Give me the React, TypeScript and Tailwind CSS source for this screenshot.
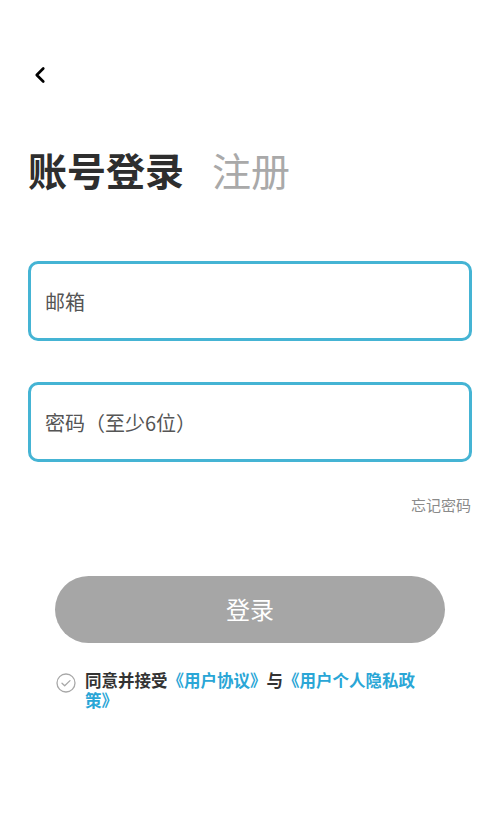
import { ChevronLeft } from 'lucide-react';

const font = { fontFamily: '"Noto Sans CJK SC", "Noto Sans", sans-serif' };

export default function App() {
  return (
    <main style={font} className="flex min-h-[840px] w-[500px] flex-col bg-white">
      <div className="flex h-[150px] items-start pt-[62px] pl-[27px]">
        <ChevronLeft className="h-[26px] w-[26px] text-black" strokeWidth={2.5} />
      </div>

      <div className="flex items-baseline gap-[28px] pl-[28px] leading-none">
        <h1 className="text-[39px] font-bold text-[#2e2e2e]">账号登录</h1>
        <span className="text-[39px] text-[#a9a9a9]">注册</span>
      </div>

      <div className="mt-[72px] flex flex-col gap-[41px] px-[28px]">
        <input
          className="h-[80px] w-full rounded-[10px] border-[3px] border-[#45b4d4] px-[14px] text-[20px] text-[#444] outline-none placeholder:text-[#555]"
          placeholder="邮箱"
        />
        <input
          className="h-[80px] w-full rounded-[10px] border-[3px] border-[#45b4d4] px-[14px] text-[20px] text-[#444] outline-none placeholder:text-[#555]"
          placeholder="密码（至少6位）"
          type="text"
        />
      </div>

      <div className="mt-[32px] flex justify-end pr-[29px]">
        <span className="text-[15px] text-[#8a8a8a]">忘记密码</span>
      </div>

      <div className="mt-[59px] px-[55px]">
        <button
          type="button"
          className="h-[67px] w-full rounded-full bg-[#a6a6a6] text-[24px] text-white"
        >
          登录
        </button>
      </div>

      <div className="mt-[27px] flex items-start gap-[9px] pl-[56px]">
        <svg viewBox="0 0 20 20" className="mt-[3px] h-[20px] w-[20px] shrink-0" fill="none">
          <circle cx="10" cy="10" r="9" stroke="#a8a8a8" strokeWidth="1.3" />
          <path d="M6 10.2l2.7 2.6L14 7.6" stroke="#a8a8a8" strokeWidth="1.3" strokeLinecap="round" strokeLinejoin="round" />
        </svg>
        <p className="w-[345px] text-[16.5px] leading-[20px] font-semibold text-[#333]">
          同意并接受<span className="text-[#2aa6d6]">《用户协议》</span>与<span className="text-[#2aa6d6]">《用户个人隐私政策》</span>
        </p>
      </div>
    </main>
  );
}
